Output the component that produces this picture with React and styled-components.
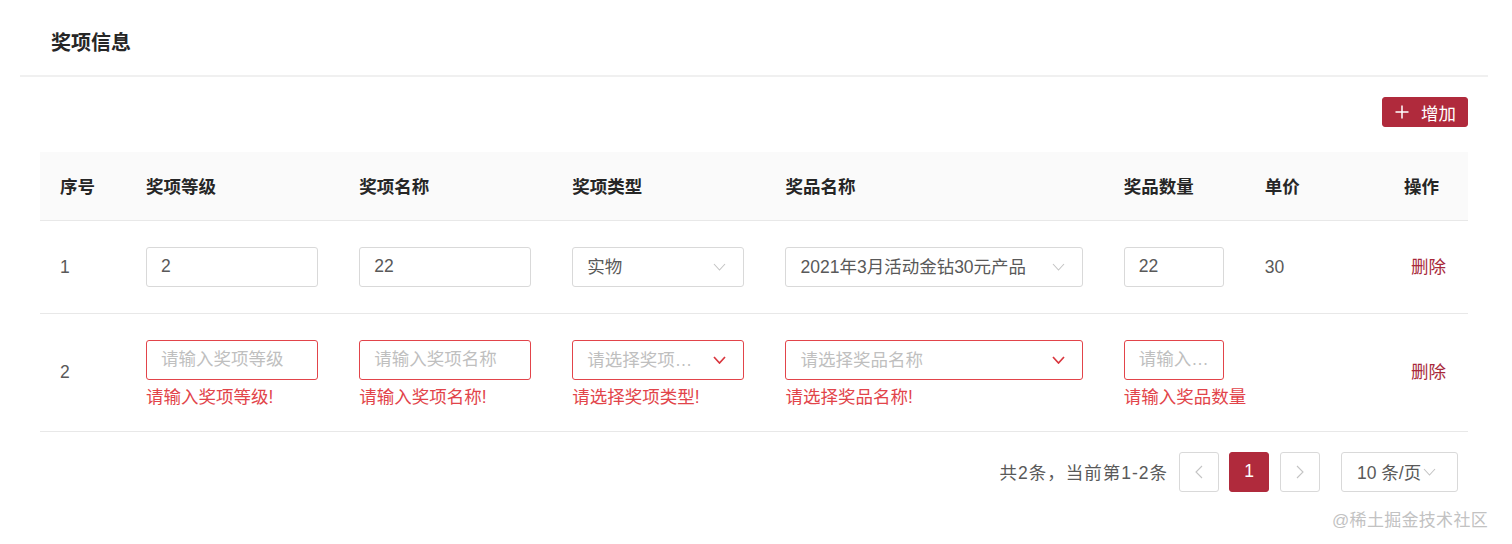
import React from 'react';
import styled, { createGlobalStyle } from 'styled-components';

const GlobalStyle = createGlobalStyle`
  html, body {
    margin: 0;
    background: #fff;
  }
  body {
    font-family: "Liberation Sans", "Noto Sans CJK SC", sans-serif;
    font-size: 17.5px;
    color: #595959;
  }
  * {
    box-sizing: border-box;
  }
`;

const Page = styled.div`
  position: relative;
  height: 544px;
  padding: 7px 24px 0 20px;
`;

const Card = styled.div`
  background: #fff;
`;

const CardHead = styled.div`
  display: flex;
  align-items: center;
  height: 70px;
  padding: 0 31px;
  border-bottom: 2px solid #f0f0f0;
  font-size: 20px;
  font-weight: 600;
  color: #262626;
`;

const CardBody = styled.div`
  padding: 20px 20px 0;
`;

const Toolbar = styled.div`
  display: flex;
  justify-content: flex-end;
  margin-bottom: 25px;
`;

const AddButton = styled.button`
  display: flex;
  align-items: center;
  gap: 12px;
  height: 30px;
  padding: 0 11px 0 12px;
  border: 1px solid #b02a3c;
  border-radius: 3px;
  background: #b02a3c;
  color: #fff;
  font-family: inherit;
  font-size: 17.5px;
  cursor: pointer;
`;

const Table = styled.table`
  width: 100%;
  border-collapse: collapse;
  table-layout: fixed;
`;

const Th = styled.th`
  height: 68px;
  padding: 0 20px;
  background: #fafafa;
  border-bottom: 1px solid #e8e8e8;
  text-align: left;
  font-size: 17.5px;
  font-weight: 600;
  color: #262626;
`;

const Td = styled.td`
  padding: 26px 20px;
  border-bottom: 1px solid #e8e8e8;
  vertical-align: middle;
  color: #595959;
  line-height: 24px;
`;

const TextInput = styled.input`
  display: block;
  width: ${p => p.$width}px;
  height: 40px;
  padding: 0 14px;
  border: 1px solid ${p => (p.$error ? '#e2444a' : '#d9d9d9')};
  border-radius: 3px;
  outline: none;
  font-family: inherit;
  font-size: 17.5px;
  color: #595959;
  text-overflow: ellipsis;

  &::placeholder {
    color: #bfbfbf;
  }
`;

const SelectBox = styled.div`
  display: flex;
  align-items: center;
  width: ${p => p.$width}px;
  height: 40px;
  padding: 0 17px 0 14px;
  border: 1px solid ${p => (p.$error ? '#e2444a' : '#d9d9d9')};
  border-radius: 3px;
  background: #fff;
`;

const SelectValue = styled.span`
  flex: 1;
  min-width: 0;
  overflow: hidden;
  white-space: nowrap;
  text-overflow: ellipsis;
  color: ${p => (p.$placeholder ? '#bfbfbf' : '#595959')};
  padding-right: 12px;
`;

const ErrorText = styled.div`
  margin-top: 5px;
  margin-bottom: -4px;
  line-height: 24px;
  color: #e2444a;
  white-space: nowrap;
`;

const DeleteLink = styled.a`
  margin-left: 7px;
  color: #a8293a;
  cursor: pointer;
`;

const Pagination = styled.div`
  display: flex;
  justify-content: flex-end;
  align-items: center;
  margin-top: 20px;
  padding-right: 10px;
`;

const Total = styled.span`
  margin-right: 11px;
  color: #595959;
  letter-spacing: 1px;
`;

const PageItem = styled.div`
  display: flex;
  align-items: center;
  justify-content: center;
  width: 40px;
  height: 40px;
  margin-right: ${p => p.$gap}px;
  border: 1px solid ${p => (p.$active ? '#b02a3c' : '#d9d9d9')};
  border-radius: 3px;
  background: ${p => (p.$active ? '#b02a3c' : '#fff')};
  color: ${p => (p.$active ? '#fff' : '#bfbfbf')};
`;

const SizeChanger = styled.div`
  display: flex;
  align-items: center;
  width: 117px;
  height: 40px;
  padding: 0 14px 0 15px;
  border: 1px solid #d9d9d9;
  border-radius: 3px;
  color: #595959;
  gap: 2px;
`;

const Watermark = styled.div`
  position: absolute;
  right: 24px;
  bottom: 13px;
  font-size: 17px;
  color: #c2c2c2;
  letter-spacing: 0.3px;
`;

const Chevron = ({ color = '#bfbfbf', weight = 1.2, dir = 'down' }) => {
  if (dir === 'down') {
    return (
      <svg width="13" height="8" viewBox="0 0 13 8">
        <polyline points="1,1 6.5,7 12,1" fill="none" stroke={color} strokeWidth={weight} />
      </svg>
    );
  }
  const pts = dir === 'left' ? '7,1 1,7 7,13' : '1,1 7,7 1,13';
  return (
    <svg width="8" height="14" viewBox="0 0 8 14">
      <polyline points={pts} fill="none" stroke={color} strokeWidth={weight} />
    </svg>
  );
};

const PlusIcon = () => (
  <svg width="14" height="14" viewBox="0 0 14 14">
    <path d="M7 0.5V13.5M0.5 7H13.5" stroke="#fff" strokeWidth="1.5" />
  </svg>
);

const Select = ({ width, value, placeholder, error }) => (
  <SelectBox $width={width} $error={error}>
    <SelectValue $placeholder={!value}>{value || placeholder}</SelectValue>
    <Chevron color={error ? '#d9363e' : '#c4c4c4'} weight={error ? 1.7 : 1.1} />
  </SelectBox>
);

const columns = [
  { title: '序号', width: 86 },
  { title: '奖项等级', width: 213 },
  { title: '奖项名称', width: 213 },
  { title: '奖项类型', width: 213 },
  { title: '奖品名称', width: 338 },
  { title: '奖品数量', width: 141 },
  { title: '单价', width: 139 },
  { title: '操作', width: 84 },
];

const rows = [
  { no: 1, level: '2', name: '22', type: '实物', prize: '2021年3月活动金钻30元产品', count: '22', price: '30' },
  { no: 2, level: '', name: '', type: '', prize: '', count: '', price: '' },
];

export default function App() {
  return (
    <>
      <GlobalStyle />
      <Page>
        <Card>
          <CardHead>奖项信息</CardHead>
          <CardBody>
            <Toolbar>
              <AddButton>
                <PlusIcon />
                增加
              </AddButton>
            </Toolbar>
            <Table>
              <colgroup>
                {columns.map(c => (
                  <col key={c.title} style={{ width: c.width }} />
                ))}
              </colgroup>
              <thead>
                <tr>
                  {columns.map(c => (
                    <Th key={c.title}>{c.title}</Th>
                  ))}
                </tr>
              </thead>
              <tbody>
                {rows.map(r => {
                  const err = !r.level;
                  return (
                    <tr key={r.no}>
                      <Td>{r.no}</Td>
                      <Td>
                        <TextInput $width={172} $error={err} readOnly defaultValue={r.level} placeholder="请输入奖项等级" />
                        {err && <ErrorText>请输入奖项等级!</ErrorText>}
                      </Td>
                      <Td>
                        <TextInput $width={172} $error={err} readOnly defaultValue={r.name} placeholder="请输入奖项名称" />
                        {err && <ErrorText>请输入奖项名称!</ErrorText>}
                      </Td>
                      <Td>
                        <Select width={172} value={r.type} placeholder="请选择奖项类型" error={err} />
                        {err && <ErrorText>请选择奖项类型!</ErrorText>}
                      </Td>
                      <Td>
                        <Select width={298} value={r.prize} placeholder="请选择奖品名称" error={err} />
                        {err && <ErrorText>请选择奖品名称!</ErrorText>}
                      </Td>
                      <Td>
                        <TextInput $width={100} $error={err} readOnly defaultValue={r.count} placeholder="请输入奖品数量" />
                        {err && <ErrorText>请输入奖品数量</ErrorText>}
                      </Td>
                      <Td>{r.price}</Td>
                      <Td>
                        <DeleteLink>删除</DeleteLink>
                      </Td>
                    </tr>
                  );
                })}
              </tbody>
            </Table>
            <Pagination>
              <Total>共2条，当前第1-2条</Total>
              <PageItem $gap={10}>
                <Chevron dir="left" color="#c4c4c4" weight={1.1} />
              </PageItem>
              <PageItem $gap={11} $active>1</PageItem>
              <PageItem $gap={21}>
                <Chevron dir="right" color="#c4c4c4" weight={1.1} />
              </PageItem>
              <SizeChanger>
                10 条/页
                <Chevron color="#c4c4c4" weight={1.1} />
              </SizeChanger>
            </Pagination>
          </CardBody>
        </Card>
        <Watermark>@稀土掘金技术社区</Watermark>
      </Page>
    </>
  );
}
